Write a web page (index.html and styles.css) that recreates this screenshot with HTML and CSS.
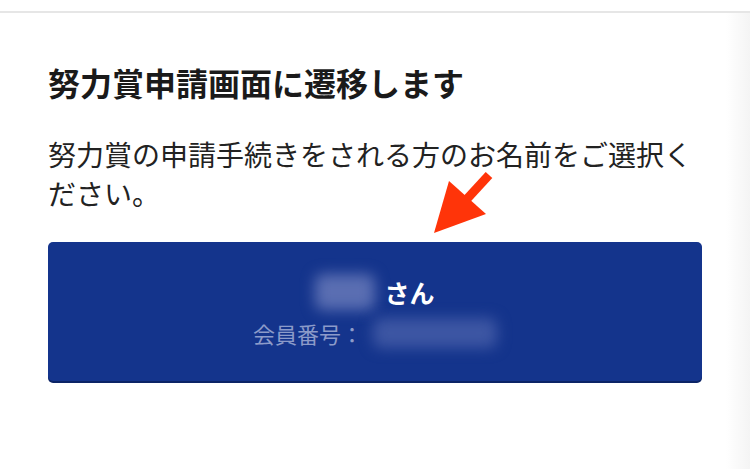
FILE: index.html
```html
<!DOCTYPE html>
<html lang="ja">
<head>
<meta charset="utf-8">
<title>努力賞申請</title>
<link rel="stylesheet" href="styles.css">
</head>
<body>
<header class="topbar"></header>
<main class="content">
  <h1 class="title">努力賞申請画面に遷移します</h1>
  <p class="lead">努力賞の申請手続きをされる方のお名前をご選択ください。</p>
  <button class="member-btn" type="button">
    <span class="name-row"><span class="blur blur-name"></span><span class="san">さん</span></span>
    <span class="no-row"><span class="no-label">会員番号：</span><span class="blur blur-no"></span></span>
  </button>
</main>
<svg class="arrow" width="66" height="70" viewBox="0 0 66 70" aria-hidden="true">
  <line x1="36" y1="32" x2="59" y2="7" stroke="#ff3409" stroke-width="9"/>
  <polygon points="4,65 19,13 56,46" fill="#ff3409"/>
</svg>
</body>
</html>
```
FILE: styles.css
```css
html, body {
  margin: 0;
  padding: 0;
}
body {
  width: 750px;
  height: 469px;
  overflow: hidden;
  font-family: "Noto Sans CJK JP", "Noto Sans", sans-serif;
  background: linear-gradient(to right, #ffffff 0, #ffffff 726px, #f4f4f4 750px);
  color: #1c1c1c;
}
.topbar {
  height: 11px;
  border-bottom: 2px solid #e6e6e6;
  background: #ffffff;
}
.content {
  padding: 0 48px;
  display: flex;
  flex-direction: column;
}
.title {
  margin: 47px 0 0;
  font-size: 32px;
  font-weight: 700;
  line-height: 44.8px;
  color: #1a1a1a;
}
.lead {
  margin: 30px 0 0;
  font-size: 28px;
  font-weight: 400;
  line-height: 39px;
  color: #222222;
}
.member-btn {
  margin-top: 29px;
  height: 139px;
  width: 654px;
  border: none;
  border-radius: 5px;
  background: #14348c;
  box-shadow: 0 2px 0 #0c2466;
  display: flex;
  flex-direction: column;
  align-items: center;
  justify-content: center;
  gap: 8px;
  padding: 0;
  font-family: inherit;
  cursor: pointer;
}
.name-row {
  display: flex;
  align-items: center;
  gap: 9px;
  height: 35px;
}
.san {
  font-size: 25px;
  font-weight: 700;
  color: #ffffff;
  line-height: 35px;
}
.no-row {
  display: flex;
  align-items: center;
  gap: 10px;
  height: 30px;
}
.no-label {
  font-size: 22px;
  color: #8c9bc9;
  line-height: 30px;
}
.blur {
  display: block;
  background: #5a6eb2;
  filter: blur(7px);
  border-radius: 8px;
}
.blur-name {
  width: 60px;
  height: 36px;
}
.blur-no {
  width: 124px;
  height: 30px;
  background: #3d56a3;
}
.arrow {
  position: absolute;
  left: 430px;
  top: 168px;
}
```
